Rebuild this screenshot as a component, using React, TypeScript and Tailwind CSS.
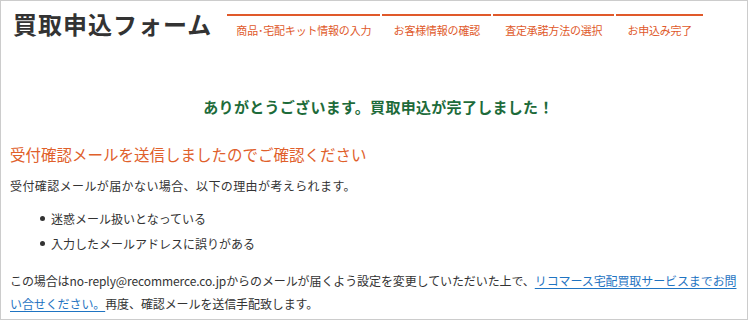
const steps = [
  { label: "商品･宅配キット情報の入力", w: "w-[153px]" },
  { label: "お客様情報の確認", w: "w-[109px]" },
  { label: "査定承諾方法の選択", w: "w-[121px]" },
  { label: "お申込み完了", w: "w-[87px]" },
];

const reasons = ["迷惑メール扱いとなっている", "入力したメールアドレスに誤りがある"];

export default function App() {
  return (
    <div
      className="w-[748px] h-[320px] border border-[#cccccc] bg-white text-[#333333]"
      style={{ fontFamily: '"Noto Sans CJK JP", "Noto Sans", sans-serif' }}
    >
      {/* Header */}
      <header className="flex items-start pl-3 pt-[11px]">
        <h1 className="text-[24px] leading-[24px] font-bold text-[#333333] tracking-[1px]">
          買取申込フォーム
        </h1>
        <nav className="ml-[15px] mt-[2px] flex gap-[2px]">
          {steps.map((s) => (
            <div
              key={s.label}
              className={`${s.w} border-t-2 border-[#e0592a] pt-[6px] text-center whitespace-nowrap text-[11px] leading-[16px] tracking-[-0.2px] text-[#e0592a]`}
            >
              {s.label}
            </div>
          ))}
        </nav>
      </header>

      <main className="pl-[9px]">
        <h2 className="mt-[59px] text-center text-[15px] leading-[20px] font-bold text-[#1d6b3a] tracking-[0.3px]">
          ありがとうございます。買取申込が完了しました！
        </h2>

        <h3 className="mt-[26px] text-[15.5px] leading-[22px] text-[#e0602b]">
          受付確認メールを送信しましたのでご確認ください
        </h3>
        <p className="mt-[11px] text-[12px] leading-[20px] tracking-[0.4px]">
          受付確認メールが届かない場合、以下の理由が考えられます。
        </p>

        <ul className="mt-[10px] pl-[30px] text-[12px]">
          {reasons.map((r) => (
            <li key={r} className="flex items-center gap-[6px] leading-[25px]">
              <span className="w-[5px] h-[5px] rounded-full bg-[#333333]" />
              {r}
            </li>
          ))}
        </ul>

        <p className="mt-[13px] text-[12px] leading-[23px] tracking-[-0.1px]">
          この場合はno-reply@recommerce.co.jpからのメールが届くよう設定を変更していただいた上で、
          <a href="#" className="text-[#1f74c2] underline underline-offset-2">
            リコマース宅配買取サービスまでお問い合せください。
          </a>
          再度、確認メールを送信手配致します。
        </p>
      </main>
    </div>
  );
}
